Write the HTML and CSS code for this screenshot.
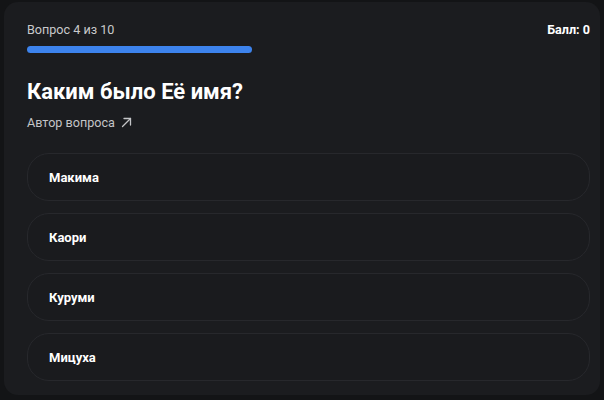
FILE: index.html
```html
<!DOCTYPE html>
<html lang="ru">
<head>
  <meta charset="UTF-8">
  <title>Викторина</title>
  <link rel="stylesheet" href="styles.css">
</head>
<body>
  <div class="quiz">
    <div class="quiz-head">
      <span class="counter">Вопрос 4 из 10</span>
      <span class="score">Балл: 0</span>
    </div>
    <div class="progress"><div class="progress-fill" style="width: 40%"></div></div>

    <h1 class="question">Каким было Её имя?</h1>
    <a class="author" href="#">Автор вопроса
      <svg width="11" height="11" viewBox="0 0 11 11" fill="none" stroke="currentColor" stroke-width="1.3" stroke-linecap="round" stroke-linejoin="round">
        <path d="M1.5 9.5 L9.5 1.5"/>
        <path d="M3 1.5 H9.5 V8"/>
      </svg>
    </a>

    <div class="options">
      <button class="option">Макима</button>
      <button class="option">Каори</button>
      <button class="option">Куруми</button>
      <button class="option">Мицуха</button>
    </div>
  </div>
</body>
</html>
```

FILE: styles.css
```css
body {
  margin: 0;
  padding: 2px 4px 0;
  background-color: #131416;
  font-family: Roboto, "Noto Sans", sans-serif;
  color: #f2f2f2;
}
.quiz {
  background: #1b1c1f;
  border-radius: 14px;
  padding: 18px 10px 12px 23px;
  height: 363px;
}
.quiz-head {
  display: flex;
  justify-content: space-between;
  align-items: center;
  height: 18px;
  font-size: 12.6px;
}
.counter {
  color: #c9cacc;
}
.score {
  font-weight: 700;
  color: #fff;
}
.progress {
  margin-top: 8px;
  height: 7px;
  border-radius: 4px;
  width: 100%;
}
.progress-fill {
  height: 100%;
  background: #3d83ec;
  border-radius: 4px;
}
.question {
  margin: 25px 0 0;
  font-size: 22px;
  line-height: 28px;
  font-weight: 700;
  color: #fff;
}
.author {
  display: inline-flex;
  align-items: center;
  gap: 6px;
  margin-top: 7px;
  height: 18px;
  font-size: 12.6px;
  color: #c4c5c7;
  text-decoration: none;
}
.options {
  display: flex;
  flex-direction: column;
  gap: 12px;
  margin-top: 22px;
}
.option {
  height: 48px;
  text-align: left;
  padding: 0 21px;
  background: #1a1b1e;
  border: 1px solid #27282c;
  border-radius: 22px;
  font-family: inherit;
  font-size: 13px;
  font-weight: 700;
  color: #fff;
  cursor: pointer;
}
```
